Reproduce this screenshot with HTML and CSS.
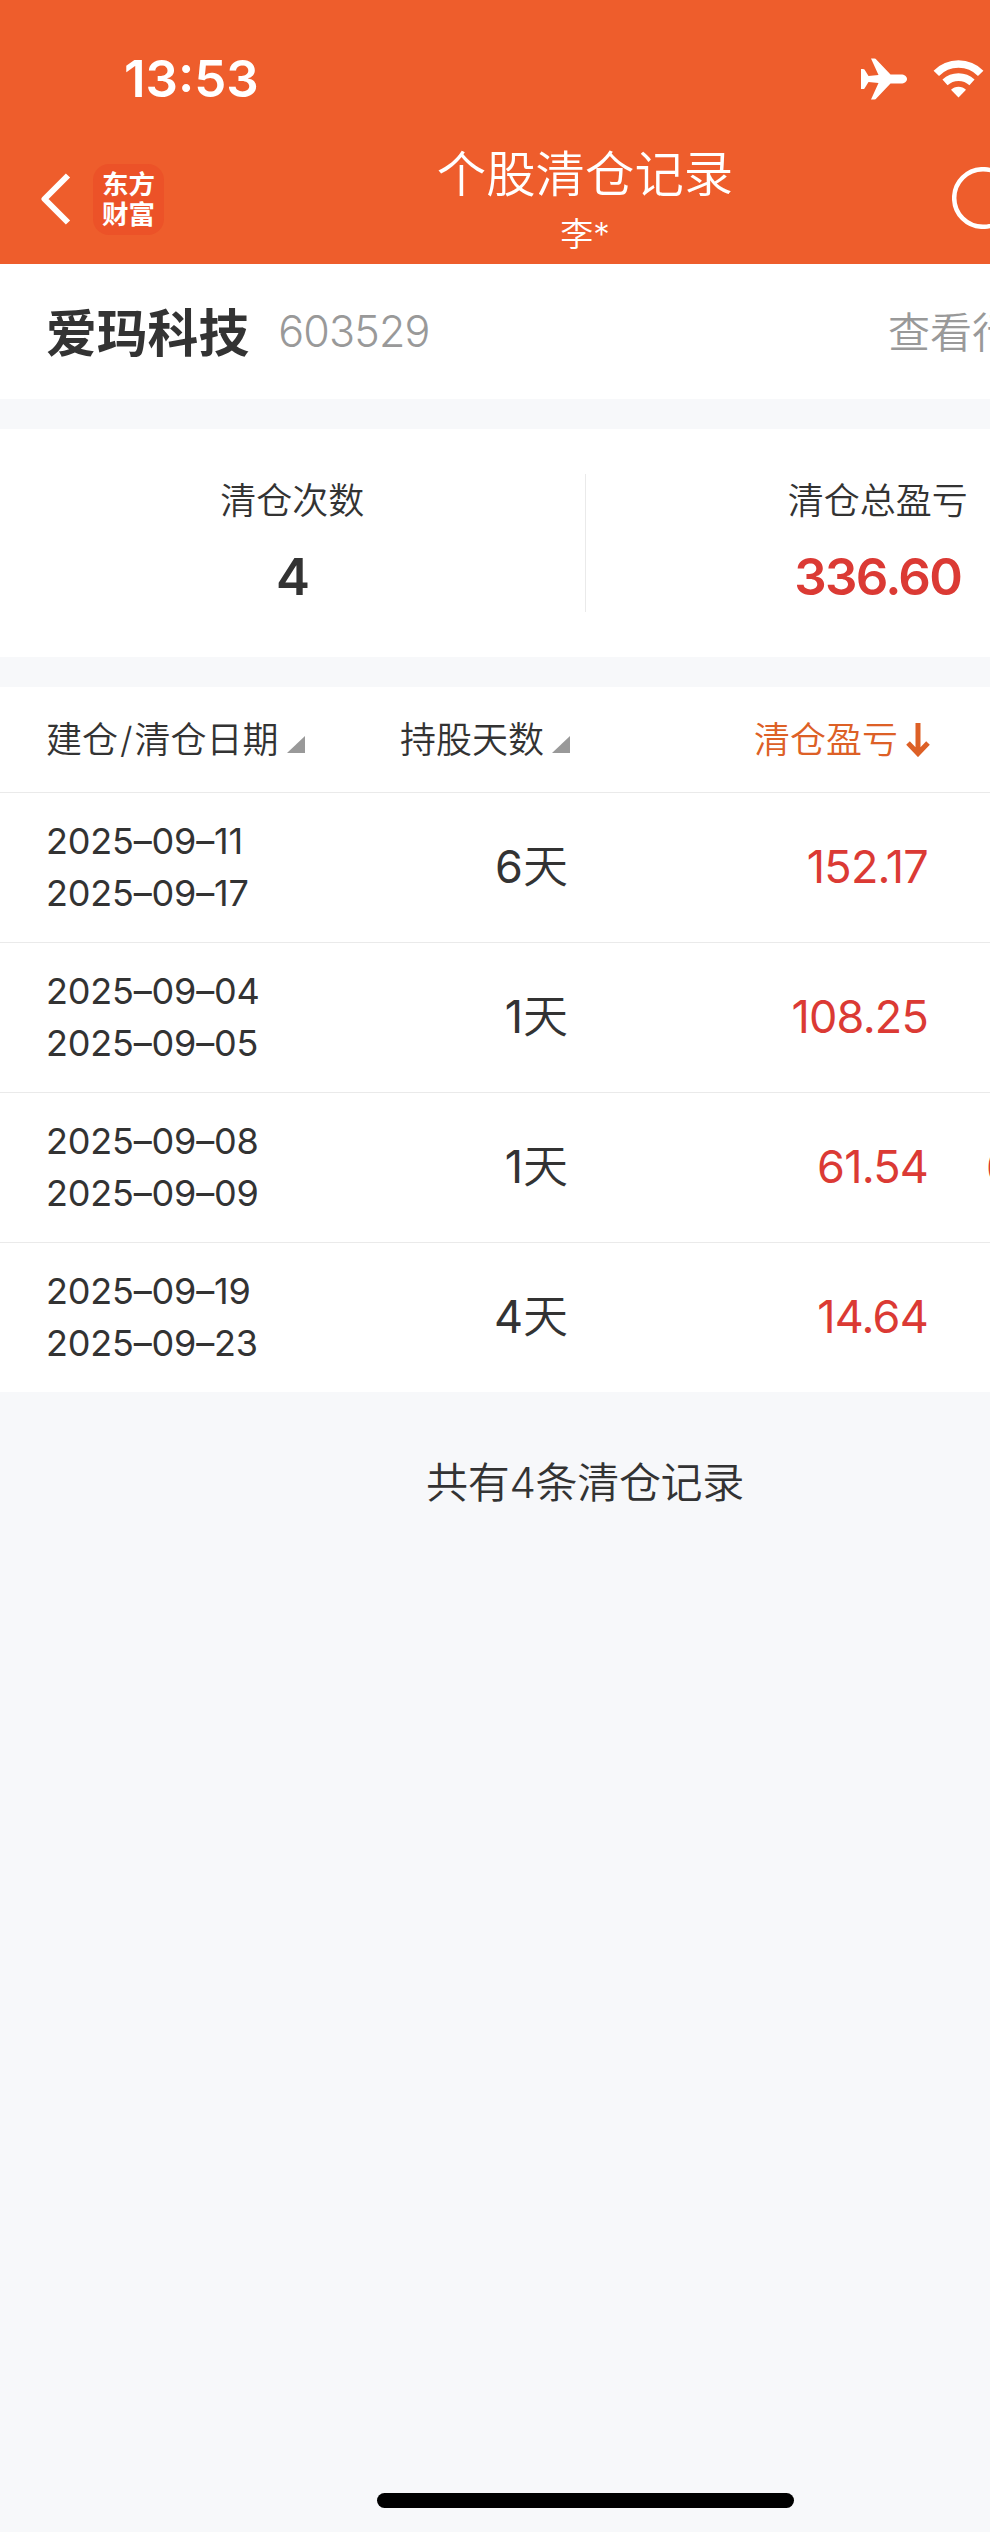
FILE: index.html
```
<!DOCTYPE html>
<html lang="zh-CN">
<head>
    <meta charset="UTF-8">
    <meta name="viewport" content="width=device-width, initial-scale=1.0">
    <title>个股清仓记录</title>
    <link rel="stylesheet" href="styles.css">
</head>
<body>

    <div class="page">
        <header class="header">
            <div class="status-bar">
                <span class="time">13:53</span>
                <div class="status-icons">
                    <svg class="plane" viewBox="0 0 46 42">
                        <path d="M10 0.5h3.500q1 0 2 1.200L29.500 16.500h10.500c3.500 0 6 2 6 4.500s-2.500 4.500-6 4.500H29.500L15.500 40.300q-1 1.200-2 1.200H10L17.500 25L7.500 24L3.500 30.500Q3 31 2 31H0V11h2q1 0 1.500.5L7.500 18L17.500 17z"/>
                    </svg>
                    <svg class="wifi" viewBox="0 0 50 38">
                        <path class="arc" d="M2.800 13.400A31 31 0 0 1 47.200 13.400"/>
                        <path class="arc" d="M11.500 22.400A20 20 0 0 1 38.500 22.400"/>
                        <path d="M17.500 29.800A10.500 10.500 0 0 1 32.500 29.800L25 37.500z"/>
                    </svg>
                </div>
            </div>
            <div class="nav-bar">
                <div class="nav-left">
                    <svg class="back" viewBox="0 0 30 52">
                        <path d="M27 2.500L3.500 26L27 49.500"/>
                    </svg>
                    <div class="logo"><span>东方</span><span>财富</span></div>
                </div>
                <div class="nav-title">
                    <h1>个股清仓记录</h1>
                    <p>李*</p>
                </div>
                <div class="nav-right">
                    <svg class="refresh" viewBox="0 0 62 62"><circle cx="31" cy="31" r="28.800"/></svg>
                </div>
            </div>
        </header>

        <section class="stock">
            <span class="stock-name">爱玛科技</span>
            <span class="stock-code">603529</span>
            <span class="stock-link">查看行情</span>
        </section>

        <section class="stats">
            <div class="stat">
                <span class="label">清仓次数</span>
                <span class="value">4</span>
            </div>
            <div class="stat">
                <span class="label">清仓总盈亏</span>
                <span class="value red">336.60</span>
            </div>
        </section>

        <section class="table">
            <div class="row table-head">
                <span class="col-date">建仓<i class="slash">/</i>清仓日期<i class="sort"></i></span>
                <span class="col-days">持股天数<i class="sort"></i></span>
                <span class="col-profit active">清仓盈亏<svg class="arrow" viewBox="0 0 24 34"><path d="M12 0V30M2 20L12 30.500L22 20"/></svg></span>
            </div>
            <div class="row">
                <div class="col-date">2025–09–11<br>2025–09–17</div>
                <div class="col-days"><b>6</b>天</div>
                <div class="col-profit">152.17</div>
            </div>
            <div class="row">
                <div class="col-date">2025–09–04<br>2025–09–05</div>
                <div class="col-days"><b>1</b>天</div>
                <div class="col-profit">108.25</div>
            </div>
            <div class="row">
                <div class="col-date">2025–09–08<br>2025–09–09</div>
                <div class="col-days"><b>1</b>天</div>
                <div class="col-profit">61.54</div>
                <div class="col-rate">6</div>
            </div>
            <div class="row">
                <div class="col-date">2025–09–19<br>2025–09–23</div>
                <div class="col-days"><b>4</b>天</div>
                <div class="col-profit">14.64</div>
            </div>
        </section>

        <p class="total">共有4条清仓记录</p>

        <div class="home-bar"></div>
    </div>

</body>
</html>
```

FILE: styles.css
```
* {
    box-sizing: border-box;
    margin: 0;
    padding: 0;
}
body {
    font-family: Inter, "Noto Sans CJK SC", sans-serif;
    font-weight: 350;
    background: #f7f8fa;
    color: #333;
    overflow: hidden;
}
.page {
    width: 1170px;
    height: 2532px;
    display: flex;
    flex-direction: column;
}
.header {
    height: 264px;
    background: #ee5d2c;
    color: #fff;
}
.status-bar {
    height: 141px;
    padding: 16px 186px 0 124px;
    display: flex;
    justify-content: space-between;
    align-items: center;
}
.time {
    font-size: 51px;
    font-weight: 600;
    line-height: 60px;
}
.status-icons {
    display: flex;
    align-items: center;
    gap: 26px;
}
.status-icons svg {
    fill: #fff;
}
.plane {
    width: 46px;
    height: 42px;
}
.wifi {
    width: 51px;
    height: 38px;
}
.wifi .arc {
    fill: none;
    stroke: #fff;
    stroke-width: 7.6;
}
.nav-bar {
    height: 123px;
    display: grid;
    grid-template-columns: 1fr auto 1fr;
}
.nav-left {
    display: flex;
    align-items: center;
    gap: 22px;
    padding: 0 0 7px 41px;
}
.back {
    width: 30px;
    height: 52px;
    fill: none;
    stroke: #fff;
    stroke-width: 6;
    stroke-linejoin: round;
}
.logo {
    width: 71px;
    height: 71px;
    border-radius: 16px;
    background: #ec5228;
    display: flex;
    flex-direction: column;
    align-items: center;
    justify-content: center;
    font-size: 26.5px;
    font-weight: 700;
    line-height: 30px;
}
.nav-title {
    text-align: center;
}
.nav-title h1 {
    font-size: 49.4px;
    font-weight: 350;
    line-height: 67px;
}
.nav-title p {
    font-size: 33px;
    line-height: 52px;
}
.nav-right {
    display: flex;
    justify-content: flex-end;
    align-items: center;
    padding: 0 156px 9px 0;
}
.refresh {
    width: 62px;
    height: 62px;
    fill: none;
    stroke: #fff;
    stroke-width: 4.5;
}
.stock {
    height: 135px;
    padding: 0 48px 4px 46px;
    background: #fff;
    display: flex;
    align-items: center;
}
.stock-name {
    font-size: 50.8px;
    font-weight: 700;
}
.stock-code {
    margin: 3px 0 0 29px;
    font-size: 43px;
    font-weight: 300;
    letter-spacing: -0.8px;
    color: #999;
}
.stock-link {
    margin-left: auto;
    margin-right: 66px;
    font-size: 42px;
    color: #999;
}
.stats {
    height: 228px;
    margin-top: 30px;
    background: #fff;
    display: flex;
    align-items: center;
}
.stat {
    flex: 1;
    height: 138px;
    display: flex;
    flex-direction: column;
    align-items: center;
}
.stat + .stat {
    border-left: 1px solid #eaeaea;
}
.label {
    font-size: 36px;
    line-height: 54px;
}
.value {
    font-size: 51px;
    line-height: 60px;
    font-weight: 560;
    letter-spacing: -1.7px;
    margin-top: 19px;
}
.red {
    color: #db3a34;
}
.table {
    margin-top: 30px;
    background: #fff;
}
.row {
    height: 150px;
    padding-left: 46px;
    display: grid;
    grid-template-columns: 300px 222px 358px 1fr;
    align-items: center;
    border-top: 1px solid #eaeaea;
}
.row .col-date {
    font-size: 36px;
    font-weight: 400;
    line-height: 52px;
    letter-spacing: -0.2px;
    padding-bottom: 2px;
}
.row .col-days,
.row .col-profit,
.row .col-rate {
    font-size: 45px;
    line-height: 66px;
    text-align: right;
}
.row .col-days {
    padding-bottom: 1px;
}
.col-days b {
    font-weight: 400;
}
.row .col-profit,
.row .col-rate {
    color: #db3a34;
    font-weight: 400;
    letter-spacing: -0.8px;
    margin-right: -2px;
    padding-bottom: 2px;
}
.row .col-rate {
    padding-left: 60px;
    text-align: left;
}
.table-head {
    height: 105px;
    border-top: none;
    white-space: nowrap;
}
.table-head .col-date,
.table-head .col-days,
.table-head .col-profit {
    font-size: 36px;
    font-weight: 350;
    line-height: 52px;
    letter-spacing: 0;
    padding: 0;
}
.table-head .col-days {
    margin-right: -2px;
}
.table-head .active {
    margin-right: -4px;
    color: #dd6026;
}
.slash {
    font-style: normal;
    margin: 0 2px;
}
.sort {
    display: inline-block;
    margin-left: 8px;
    border-left: 18px solid transparent;
    border-bottom: 17px solid #999;
}
.arrow {
    width: 24px;
    height: 34px;
    margin-left: 8px;
    fill: none;
    stroke: #dd6026;
    stroke-width: 5;
    vertical-align: -4px;
}
.total {
    margin-top: 61px;
    font-size: 42px;
    line-height: 60px;
    letter-spacing: -0.3px;
    text-align: center;
}
.home-bar {
    width: 417px;
    height: 15px;
    margin: auto auto 24px;
    border-radius: 8px;
    background: #000;
}
```
